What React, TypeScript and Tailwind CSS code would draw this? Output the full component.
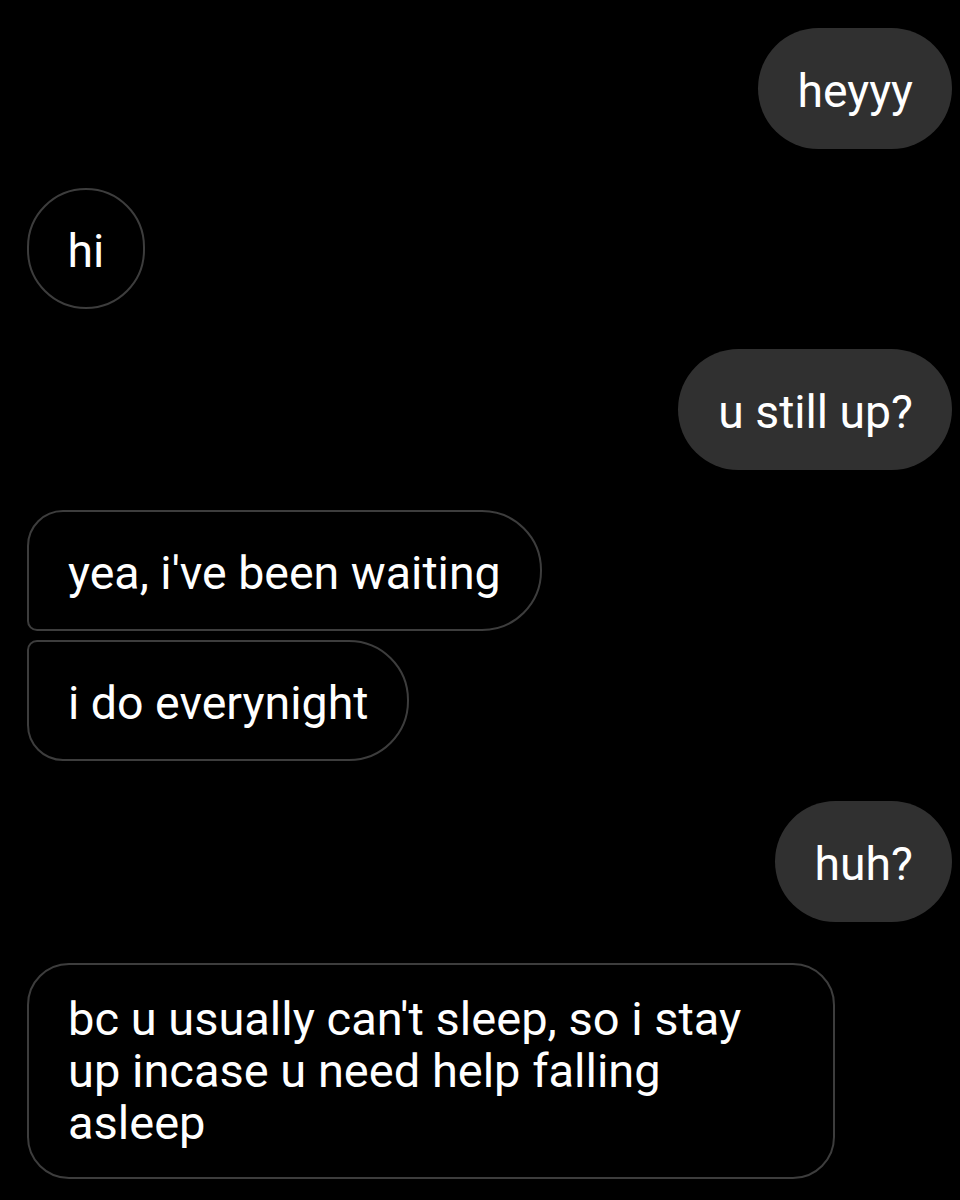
import React from "react";

const font = { fontFamily: "Roboto, 'Noto Sans', sans-serif" };

function Sent({ text, mt }: { text: string; mt: string }) {
  return (
    <div className={`flex justify-end pr-[8px] ${mt}`}>
      <div className="h-[121px] flex items-center rounded-full bg-[#303030] pl-[40px] pr-[39px] pt-[4px] text-[46.3px] leading-[52px] text-white">
        {text}
      </div>
    </div>
  );
}

export default function App() {
  return (
    <div className="w-[960px] h-[1200px] bg-black overflow-hidden pt-[28px]" style={font}>
      <Sent text="heyyy" mt="" />

      <div className="flex pl-[27px] mt-[39px]">
        <div className="w-[118px] h-[121px] rounded-full border-2 border-[#3d3d3d] flex items-center justify-center pt-[4px] text-[46.3px] leading-[52px] text-white">
          hi
        </div>
      </div>

      <Sent text="u still up?" mt="mt-[40px]" />

      <div className="flex flex-col items-start pl-[27px] mt-[40px] gap-[9px]">
        <div className="h-[121px] flex items-center border-2 border-[#3d3d3d] rounded-tl-[36px] rounded-bl-[10px] rounded-r-[60px] pl-[39px] pr-[39px] pt-[4px] text-[46.5px] leading-[52px] text-white">
          yea, i've been waiting
        </div>
        <div className="h-[121px] flex items-center border-2 border-[#3d3d3d] rounded-tl-[10px] rounded-bl-[36px] rounded-r-[60px] pl-[39px] pr-[39px] pt-[4px] text-[46.5px] leading-[52px] text-white">
          i do everynight
        </div>
      </div>

      <Sent text="huh?" mt="mt-[40px]" />

      <div className="flex pl-[27px] mt-[41px]">
        <div className="w-[808px] h-[216px] border-2 border-[#3d3d3d] rounded-[42px] pl-[39px] pr-[90px] pt-[28px] text-[47px] leading-[52px] text-white">
          bc u usually can't sleep, so i stay up incase u need help falling asleep
        </div>
      </div>
    </div>
  );
}
